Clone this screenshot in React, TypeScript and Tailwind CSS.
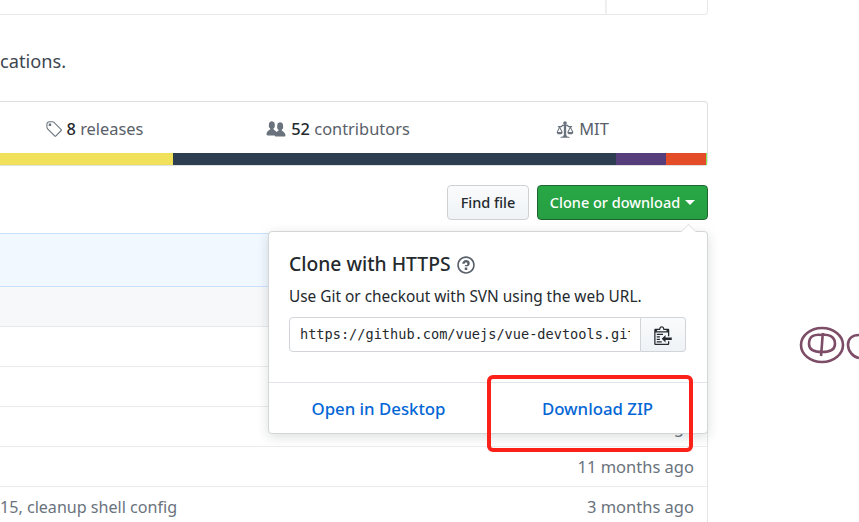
const octicons = {
  tag: "M7.73 1.73C7.26 1.26 6.62 1 5.96 1H3.5C2.13 1 1 2.13 1 3.5v2.47c0 .66.27 1.3.73 1.77l6.06 6.06c.39.39 1.02.39 1.41 0l4.59-4.59a.996.996 0 000-1.41L7.73 1.73zM2.38 7.09c-.31-.3-.47-.7-.47-1.13V3.5c0-.88.72-1.59 1.59-1.59h2.47c.42 0 .83.16 1.13.47l6.14 6.13-4.73 4.73-6.13-6.15zM3.01 3h2v2H3V3h.01z",
  law: "M7 4c-.83 0-1.5-.67-1.5-1.5S6.17 1 7 1s1.5.67 1.5 1.5S7.83 4 7 4zm7 6c0 1.11-.89 2-2 2h-1c-1.11 0-2-.89-2-2l2-4h-1c-.55 0-1-.45-1-1H8v8c.42 0 1 .45 1 1h1c.42 0 1 .45 1 1H3c0-.55.58-1 1-1h1c0-.55.58-1 1-1h.03L6 5H5c0 .55-.45 1-1 1H3l2 4c0 1.11-.89 2-2 2H2c-1.11 0-2-.89-2-2l2-4H1V5h3c0-.55.45-1 1-1h4c.55 0 1 .45 1 1h3v1h-1l2 4zM2.5 7L1 10h3L2.5 7zM13 10l-1.5-3-1.5 3h3z",
  question: "M6 10h2v2H6v-2zm4-3.5C10 8.64 8 9 8 9H6c0-.55.45-1 1-1h.5c.28 0 .5-.22.5-.5v-1c0-.28-.22-.5-.5-.5h-1c-.28 0-.5.22-.5.5V7H4c0-1.5 1.5-3 3-3s3 1 3 2.5zM7 2.3c3.14 0 5.7 2.56 5.7 5.7s-2.56 5.7-5.7 5.7A5.71 5.71 0 011.3 8c0-3.14 2.56-5.7 5.7-5.7zM7 1C3.14 1 0 4.14 0 8s3.14 7 7 7 7-3.14 7-7-3.14-7-7-7z",
  clippy: "M2 13h4v1H2v-1zm5-6H2v1h5V7zm2 3V8l-3 3 3 3v-2h5v-2H9zM4.5 9H2v1h2.5V9zM2 12h2.5v-1H2v1zm9 1h1v2c-.02.28-.11.52-.3.7-.19.18-.42.28-.7.3H1c-.55 0-1-.45-1-1V4c0-.55.45-1 1-1h3c0-1.11.89-2 2-2 1.11 0 2 .89 2 2h3c.55 0 1 .45 1 1v5h-1V6H1v9h10v-2zM2 5h8c0-.55-.45-1-1-1H8c-.55 0-1-.45-1-1s-.45-1-1-1-1 .45-1 1-.45 1-1 1H3c-.55 0-1 .45-1 1z",
};
const peoplePath =
  "M16 12.999c0 .439-.45 1-1 1H7.995c-.539 0-.994-.447-.995-.999H1c-.54 0-1-.561-1-1 0-2.634 3-4 3-4s.229-.409 0-1c-.841-.621-1.058-.59-1-3 .058-2.419 1.367-3 2.5-3s2.442.58 2.5 3c.058 2.41-.159 2.379-1 3-.229.59 0 1 0 1s1.549.711 2.42 2.088C9.196 9.369 10 8.999 10 8.999s.229-.409 0-1c-.841-.62-1.058-.59-1-3 .058-2.419 1.367-3 2.5-3s2.437.581 2.495 3c.059 2.41-.158 2.38-1 3-.229.59 0 1 0 1s3.005 1.366 3.005 4z";

const Octicon = ({ d, w = 14, className }: { d: string; w?: number; className?: string }) => (
  <svg viewBox={`0 0 ${w} 16`} className={className} fill="currentColor" fillRule="evenodd">
    <path d={d} />
  </svg>
);

const rows = [
  { time: "" },
  { time: "" },
  { time: "5 months ago" },
  { time: "11 months ago" },
  { time: "3 months ago", message: "15, cleanup shell config" },
];

export default function App() {
  return (
    <div className="relative w-[859px] h-[522px] overflow-hidden bg-white font-['Noto_Sans',sans-serif] text-[#24292e]">
      <div className="flex w-[708px] flex-col">
        {/* bottom edge of the readme box above */}
        <div className="flex h-[15px] justify-end rounded-br border-r border-b border-[#e9e9e9]">
          <div className="mr-[100px] w-[2px] bg-[#eeeeee]" />
        </div>

        <p className="mt-[33px] h-[26px] text-[18.2px] leading-[27px] text-[#3c4650]">cations.</p>

        {/* repo stats */}
        <div className="mt-[27px] flex h-[65px] flex-col rounded-r border-y border-r border-[#dfdfdf]">
          <div className="grid h-[51px] grid-cols-[216px_244px_1fr] pt-[3px] text-[16.4px] text-[#586069]">
            <div className="flex items-center justify-center gap-[5px] pr-[28px]">
              <Octicon d={octicons.tag} className="h-[19px] w-[17px] text-[#6a737d]" />
              <span><b className="font-medium text-[#24292e]">8</b> releases</span>
            </div>
            <div className="flex items-center justify-center gap-[5px]">
              <Octicon d={peoplePath} w={16} className="h-[19px] w-[20px] text-[#6a737d]" />
              <span><b className="font-medium text-[#24292e]">52</b> contributors</span>
            </div>
            <div className="flex items-center justify-center gap-[5px] pr-[2px]">
              <Octicon d={octicons.law} className="h-[19px] w-[18px] text-[#6a737d]" />
              <span>MIT</span>
            </div>
          </div>
          <div className="flex h-[12px]">
            <div className="w-[173px] bg-[#f1e05a]" />
            <div className="w-[443px] bg-[#2c3e50]" />
            <div className="w-[50px] bg-[#563d7c]" />
            <div className="w-[40px] bg-[#e34c26]" />
            <div className="flex-1 bg-[#89e051]" />
          </div>
        </div>

        {/* file actions */}
        <div className="mt-[19px] flex justify-end gap-[8px]">
          <button className="flex h-[35px] w-[82px] items-center justify-center rounded border border-[#cfd1d4] bg-gradient-to-b from-[#fafbfc] to-[#eff3f6] text-[14.5px] font-medium">
            Find file
          </button>
          <button className="flex h-[35px] w-[171px] items-center justify-center gap-[5px] rounded border border-[#1d6530] bg-gradient-to-b from-[#28a745] to-[#269f42] text-[14.5px] font-medium text-white">
            Clone or download
            <span className="mt-[-1px] border-x-[5px] border-t-[5px] border-x-transparent border-t-white" />
          </button>
        </div>

        {/* file table */}
        <div className="mt-[13px] border-r border-[#e4e4e4]">
          <div className="h-[54px] border-y border-[#c8e1ff] bg-[#f1f8ff]" />
          <div className="h-[40px] border-b border-[#e9e9e9] bg-[#f6f8fa]" />
          {rows.map((row, i) => (
            <div key={i} className="flex h-[40px] items-center justify-between border-b border-[#eaecef] pt-[2px] pr-[13px] text-[16.5px] text-[#6a737d]">
              <span className="text-[16.1px]">{row.message}</span>
              <span>{row.time}</span>
            </div>
          ))}
        </div>
      </div>

      {/* clone popover */}
      <div className="absolute left-[268px] top-[231px] flex h-[203px] w-[440px] flex-col rounded border border-[#d3d5d7] bg-white shadow-[0_3px_12px_rgba(27,31,35,0.15)]">
        <span className="absolute right-[13px] top-[-6px] h-[11px] w-[11px] rotate-45 border-t border-l border-[#e4e5e6] bg-white" />
        <div className="flex h-[150px] flex-col pl-[20px] pr-[19px] pt-[19px]">
          <h3 className="flex items-center gap-[6px] text-[19.3px] font-medium leading-[26px]">
            Clone with HTTPS
            <Octicon d={octicons.question} className="mt-[2px] h-[20px] w-[18px] text-[#586069]" />
          </h3>
          <p className="mt-[10px] text-[15.4px] leading-[20px]">Use Git or checkout with SVN using the web URL.</p>
          <div className="mt-[10px] flex h-[35px] w-[397px]">
            <div className="flex flex-1 items-center overflow-hidden whitespace-nowrap rounded-l border border-[#d1d5da] pl-[10px] pr-[10px] font-['DejaVu_Sans_Mono',monospace] text-[13.6px]">
              <span className="overflow-hidden">https://github.com/vuejs/vue-devtools.git</span>
            </div>
            <div className="flex w-[45px] items-center justify-center rounded-r border border-l-0 border-[#d1d5da] bg-gradient-to-b from-[#fafbfc] to-[#eff3f6]">
              <Octicon d={octicons.clippy} className="h-[20px] w-[18px]" />
            </div>
          </div>
        </div>
        <div className="grid flex-1 grid-cols-2 border-t border-[#e1e4e8] pt-[2px] text-[16.8px] font-medium text-[#0366d6]">
          <div className="flex items-center justify-center">Open in Desktop</div>
          <div className="flex items-center justify-center">Download ZIP</div>
        </div>
      </div>

      {/* red annotation */}
      <div className="absolute left-[487px] top-[375px] h-[77px] w-[206px] rounded-[6px] border-[4px] border-[#fb2018]" />

      {/* doodle on the right edge */}
      <svg className="absolute left-[795px] top-[322px]" width="64" height="44" viewBox="0 0 64 44" fill="none" stroke="#7d4d68" strokeWidth="2.6">
        <ellipse cx="27" cy="23" rx="21" ry="17" />
        <path d="M27 13c-8-1-13 1-13 9 0 6 6 8 13 8s13-2 13-8c0-8-7-10-13-9M28 11c-1 7-1 14-2 23" />
        <path d="M64 13c-7 0-11 4-11 10s5 12 11 13" />
      </svg>
    </div>
  );
}
